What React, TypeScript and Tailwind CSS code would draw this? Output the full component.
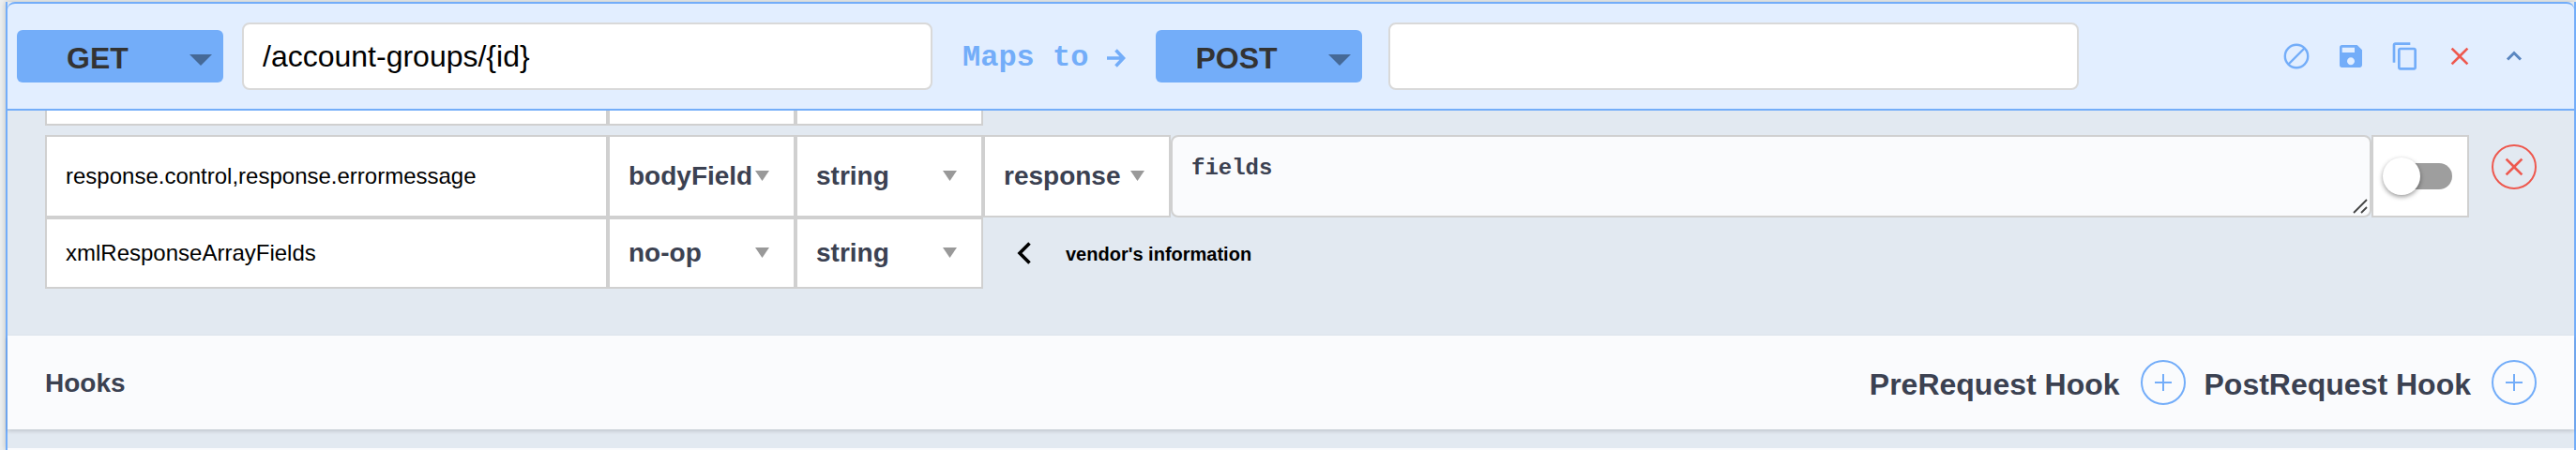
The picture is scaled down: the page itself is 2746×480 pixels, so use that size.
import { useState } from "react";
import { MdClose, MdContentCopy, MdSave } from "react-icons/md";

const METHODS = ["GET", "POST", "PUT", "PATCH", "DELETE"];
const PARAM_TYPES = ["bodyField", "no-op", "path", "query"];
const VALUE_TYPES = ["string", "number", "boolean"];
const SOURCES = ["response", "request"];

function MethodSelect({ label, initial }: { label: string; initial: string }) {
  const [value, setValue] = useState(initial);
  return (
    <div className="grid shrink-0 items-center">
      <select
        aria-label={label}
        value={value}
        onChange={(e) => setValue(e.target.value)}
        className="col-start-1 row-start-1 h-14 w-[220px] appearance-none rounded-md bg-[#73adf9] pr-12 pt-1 text-center text-[32px] leading-none font-bold text-[#333] [text-align-last:center]"
      >
        {METHODS.map((m) => (
          <option key={m}>{m}</option>
        ))}
      </select>
      <svg
        viewBox="0 0 24 12"
        className="pointer-events-none col-start-1 row-start-1 mt-2 mr-3 h-3 w-6 justify-self-end"
        fill="#456997"
      >
        <path d="M0 0h24L12 12z" />
      </svg>
    </div>
  );
}

function CellSelect({
  label,
  initial,
  options,
}: {
  label: string;
  initial: string;
  options: string[];
}) {
  const [value, setValue] = useState(initial);
  return (
    <div className="grid w-[200px] shrink-0 items-center border-2 border-[#d0d0d0] bg-white">
      <select
        aria-label={label}
        value={value}
        onChange={(e) => setValue(e.target.value)}
        className="col-start-1 row-start-1 h-full w-full appearance-none bg-transparent pl-5 text-[28px] font-bold text-[#3b4151]"
      >
        {options.map((o) => (
          <option key={o}>{o}</option>
        ))}
      </select>
      <svg
        viewBox="0 0 15 11"
        className="pointer-events-none col-start-1 row-start-1 mr-[26px] mb-[2px] h-[11px] w-[15px] justify-self-end"
        fill="#999"
      >
        <path d="M0 0h15L7.500 11z" />
      </svg>
    </div>
  );
}

function NameInput({ label, initial }: { label: string; initial: string }) {
  return (
    <input
      aria-label={label}
      defaultValue={initial}
      className="w-[600px] shrink-0 border-2 border-[#d0d0d0] bg-white px-5 text-2xl text-black outline-none"
    />
  );
}

function Toggle() {
  return (
    <label className="flex w-[104px] shrink-0 cursor-pointer items-center border-2 border-[#d0d0d0] bg-white pl-3">
      <input type="checkbox" aria-label="Required" className="peer sr-only" />
      <span className="flex h-7 w-[72px] items-center rounded-full bg-[#9e9e9e]">
        <span className="-ml-[2px] size-10 shrink-0 rounded-full bg-white shadow-[0_2px_5px_rgba(0,0,0,0.4)]" />
      </span>
    </label>
  );
}

function AddButton({ label }: { label: string }) {
  return (
    <button
      type="button"
      aria-label={label}
      className="flex size-12 items-center justify-center rounded-full border-2 border-[#73adf9] text-[#73adf9]"
    >
      <svg viewBox="0 0 18 18" className="size-[18px]" stroke="currentColor" strokeWidth="2">
        <path d="M9 0v18M0 9h18" />
      </svg>
    </button>
  );
}

function Header() {
  return (
    <header className="flex h-[116px] items-center rounded-t-lg border-y-2 border-[#73adf9] bg-[#e2eeff] pl-[10px] pr-12">
      <MethodSelect label="Source method" initial="GET" />
      <input
        aria-label="Source path"
        defaultValue="/account-groups/{id}"
        className="ml-5 h-[72px] min-w-0 flex-1 rounded-lg border-2 border-[#d9d9d9] bg-white px-5 text-[32px] text-black outline-none"
      />
      <div className="mr-8 ml-8 flex w-[174px] shrink-0 items-center justify-between pt-1 text-[#73adf9]">
        <span className="font-['Liberation_Mono',monospace] text-[32px] font-bold whitespace-nowrap">
          Maps to
        </span>
        <svg viewBox="0 0 20 22" className="h-[22px] w-5" fill="none" stroke="currentColor" strokeWidth="3.600">
          <path d="M0 11h17M9.500 2.500L17.500 11l-8 8.500" />
        </svg>
      </div>
      <MethodSelect label="Target method" initial="POST" />
      <input
        aria-label="Target path"
        className="ml-7 h-[72px] min-w-0 flex-1 rounded-lg border-2 border-[#d9d9d9] bg-white px-5 text-[32px] text-black outline-none"
      />
      <div className="ml-[216px] flex shrink-0 items-center gap-[26px] text-[#73adf9]">
        <button type="button" aria-label="Disable">
          <svg viewBox="0 0 32 32" className="size-8" fill="none" stroke="currentColor" strokeWidth="2.400">
            <circle cx="16" cy="16" r="12.200" />
            <path d="M7.500 24.500l17-17" />
          </svg>
        </button>
        <button type="button" aria-label="Save">
          <MdSave className="size-8" />
        </button>
        <button type="button" aria-label="Copy">
          <MdContentCopy className="size-8" />
        </button>
        <button type="button" aria-label="Delete" className="text-[#ee594f]">
          <MdClose className="size-8" />
        </button>
        <button type="button" aria-label="Collapse" className="text-[#5a86c0]">
          <svg viewBox="0 0 32 32" className="size-8" fill="none" stroke="currentColor" strokeWidth="3">
            <path d="M9 19.500l7-7 7 7" />
          </svg>
        </button>
      </div>
    </header>
  );
}

function Mappings() {
  return (
    <section className="pb-[50px] pl-10 pr-10">
      <div className="flex h-4">
        <div className="w-[600px] border-2 border-t-0 border-[#d0d0d0] bg-white" />
        <div className="w-[200px] border-2 border-t-0 border-[#d0d0d0] bg-white" />
        <div className="w-[200px] border-2 border-t-0 border-[#d0d0d0] bg-white" />
      </div>
      <div className="mt-[10px] flex h-[88px]">
        <NameInput label="Parameter name" initial="response.control,response.errormessage" />
        <CellSelect label="Parameter location" initial="bodyField" options={PARAM_TYPES} />
        <CellSelect label="Parameter type" initial="string" options={VALUE_TYPES} />
        <CellSelect label="Mapping source" initial="response" options={SOURCES} />
        <textarea
          aria-label="Mapping expression"
          defaultValue="fields"
          className="min-w-0 flex-1 resize-none rounded-lg border-2 border-[#d0d0d0] bg-[#fafbfd] px-5 py-[18px] font-['Liberation_Mono',monospace] text-2xl font-bold text-[#3b4151] outline-none"
        />
        <div className="relative">
          <svg
            viewBox="0 0 16 16"
            className="pointer-events-none absolute right-1 bottom-1 size-4"
            fill="none"
            stroke="#444"
            strokeWidth="1.800"
          >
            <path d="M1 15L15 1M9 15l6-6" />
          </svg>
        </div>
        <Toggle />
        <button
          type="button"
          aria-label="Remove parameter"
          className="mt-[10px] ml-6 flex size-12 shrink-0 items-center justify-center rounded-full border-2 border-[#ee594f] text-[#ee594f]"
        >
          <MdClose className="size-8" />
        </button>
      </div>
      <div className="flex h-[76px]">
        <NameInput label="Parameter name" initial="xmlResponseArrayFields" />
        <CellSelect label="Parameter location" initial="no-op" options={PARAM_TYPES} />
        <CellSelect label="Parameter type" initial="string" options={VALUE_TYPES} />
        <button type="button" aria-label="Expand mapping" className="ml-9">
          <svg viewBox="0 0 16 24" className="h-6 w-4" fill="none" stroke="#000" strokeWidth="3.600">
            <path d="M13.500 1.500L3 12l10.500 10.500" />
          </svg>
        </button>
        <span className="ml-9 self-center pt-[2px] text-xl font-bold text-black">vendor's information</span>
      </div>
    </section>
  );
}

function Hooks() {
  return (
    <section className="flex h-[100px] items-center bg-[#fafbfd] px-10 text-[#3b4151] shadow-[0_2px_4px_rgba(0,0,0,0.15)]">
      <h2 className="pt-[2px] text-[28px] font-bold">Hooks</h2>
      <div className="ml-auto flex items-center text-[32px] font-bold">
        <span className="mt-1 mr-[22px]">PreRequest Hook</span>
        <AddButton label="Add PreRequest hook" />
        <span className="mt-1 mr-[22px] ml-5">PostRequest Hook</span>
        <AddButton label="Add PostRequest hook" />
      </div>
    </section>
  );
}

export default function App() {
  return (
    <div className="h-screen overflow-hidden bg-[#ebeeef] pt-[2px] pl-[6px] font-['Liberation_Sans',Arial,sans-serif]">
      <div className="h-full border-x-2 border-[#73adf9] bg-[#e2e9f1] shadow-[0_0_6px_rgba(0,0,0,0.2)]">
        <Header />
        <Mappings />
        <Hooks />
        <div className="mt-5 h-[100px] bg-[#fafbfd]" />
      </div>
    </div>
  );
}
